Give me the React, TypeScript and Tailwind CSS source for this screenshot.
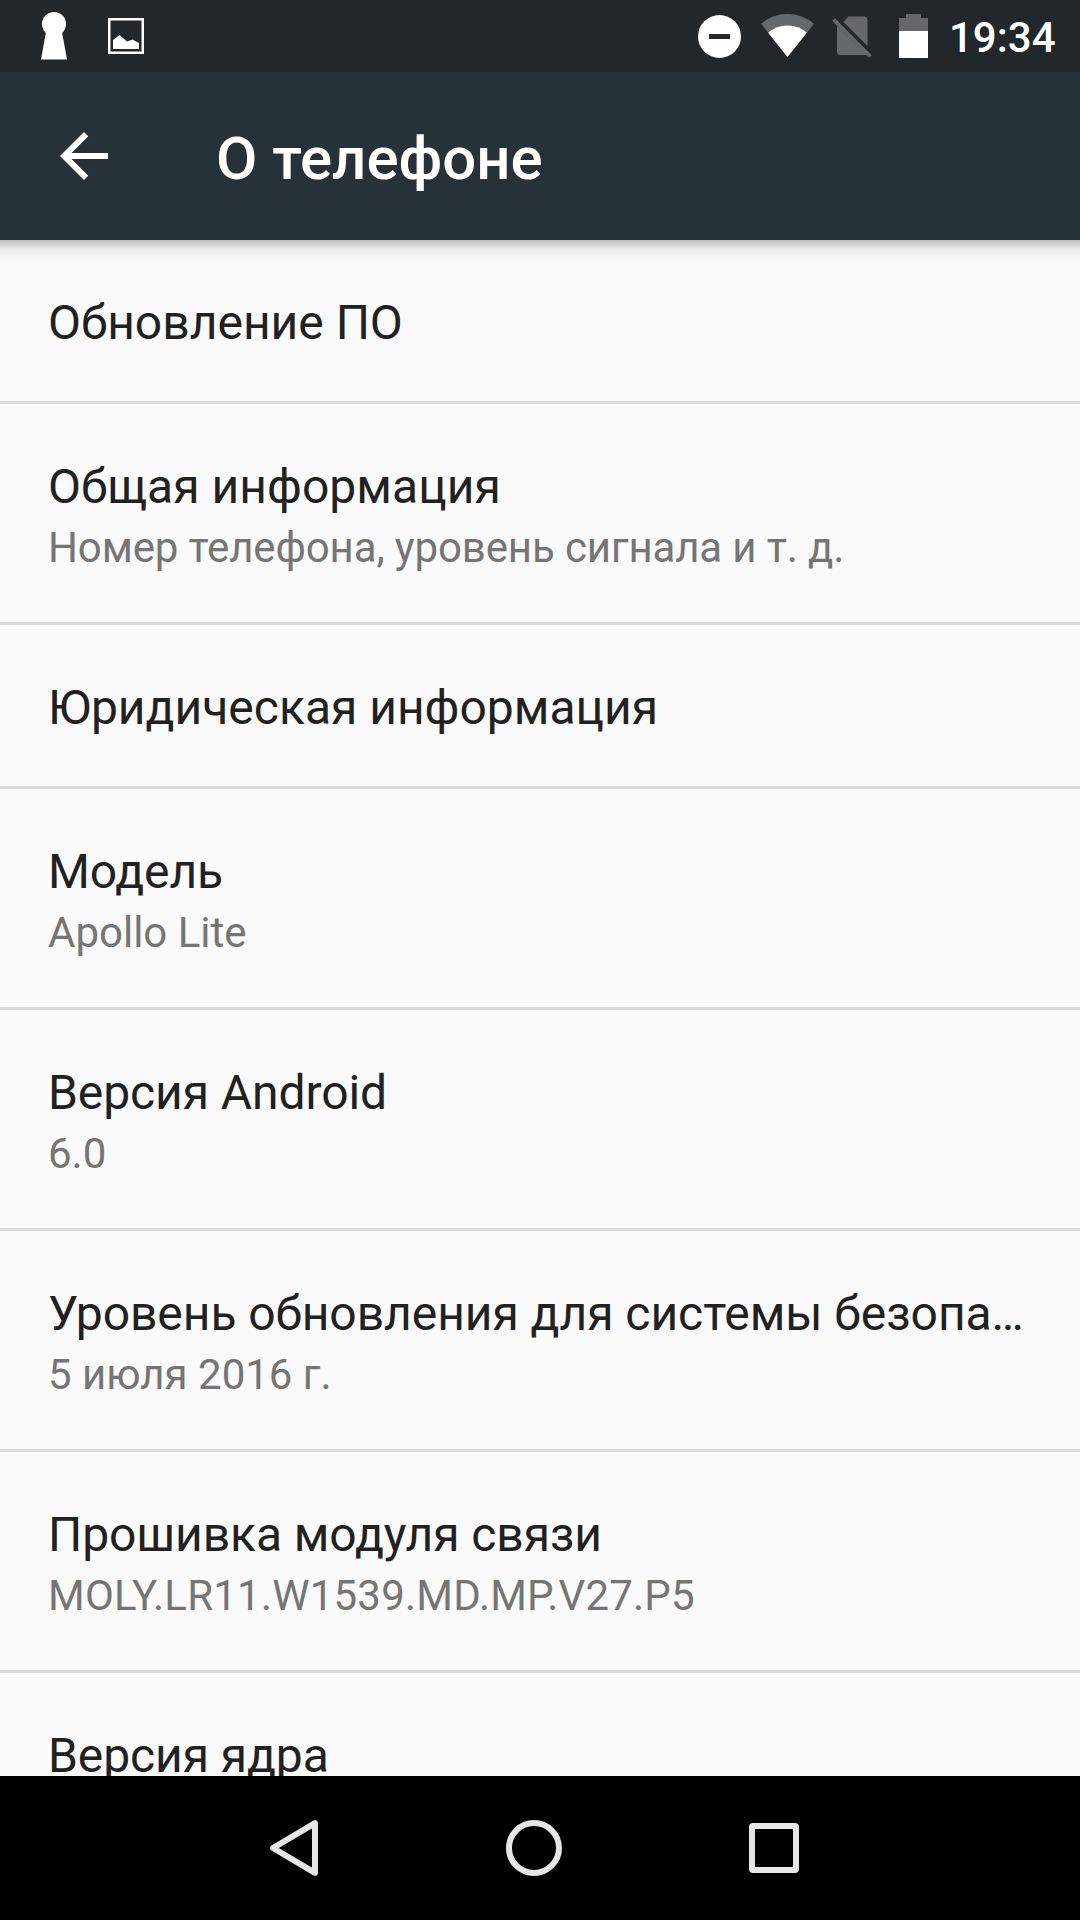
interface Item {
  title: string;
  summary?: string;
  titleClass?: string;
  summaryClass?: string;
}

const ITEMS: Item[] = [
  { title: "Обновление ПО" },
  {
    title: "Общая информация",
    summary: "Номер телефона, уровень сигнала и т. д.",
    titleClass: "tracking-[0.05px]",
    summaryClass: "tracking-[-0.13px]",
  },
  { title: "Юридическая информация" },
  { title: "Модель", summary: "Apollo Lite", titleClass: "tracking-[-0.15px]" },
  { title: "Версия Android", summary: "6.0", titleClass: "tracking-[-0.08px]" },
  {
    title: "Уровень обновления для системы безопа…",
    summary: "5 июля 2016 г.",
    titleClass: "tracking-[-0.05px]",
  },
  {
    title: "Прошивка модуля связи",
    summary: "MOLY.LR11.W1539.MD.MP.V27.P5",
    titleClass: "tracking-[-0.08px]",
    summaryClass: "tracking-[0.22px]",
  },
  { title: "Версия ядра", titleClass: "tracking-[-0.1px]" },
];

function KeyholeIcon() {
  return (
    <svg width="26" height="48" viewBox="0 0 26 48" fill="#fff">
      <circle cx="13" cy="12" r="12" />
      <path d="M5.2 19H20.8L26 47.6H0z" />
    </svg>
  );
}

function PictureIcon() {
  return (
    <svg width="36" height="36" viewBox="0 0 36 36" fill="#fff">
      <rect x="1.25" y="1.25" width="33.5" height="33.5" fill="none" stroke="#fff" strokeWidth="2.5" />
      <path d="M5 31V22L11.5 17L19 23.5L24.5 21.5L31 25V31z" />
    </svg>
  );
}

function DndIcon() {
  return (
    <svg width="43" height="43" viewBox="0 0 43 43">
      <circle cx="21.5" cy="21.5" r="21.5" fill="#fff" />
      <rect x="11" y="19" width="21" height="5" fill="#22272b" />
    </svg>
  );
}

function WifiIcon() {
  return (
    <svg width="53" height="43" viewBox="0 0 53 43">
      <path d="M26.5 43L0 9.8Q11.5 0 26.5 0T53 9.8z" fill="#66696c" />
      <path d="M26.5 43L7.2 18.8Q15.5 11.5 26.5 11.5T45.8 18.8z" fill="#fff" />
    </svg>
  );
}

function NoSimIcon() {
  return (
    <svg width="40" height="42" viewBox="0 0 40 42">
      <path d="M11.5 6L16.5 0.5H32Q35.5 0.5 35.5 4V30z" fill="#66696c" />
      <path d="M5 9.5L35 39H8.5Q5 39 5 35.5z" fill="#66696c" />
      <path d="M1.6 3.4L38.4 40.4" stroke="#66696c" strokeWidth="3.6" />
    </svg>
  );
}

function BatteryIcon() {
  return (
    <svg width="29" height="44" viewBox="0 0 29 44">
      <path d="M7 0H22V4H29V17H0V4H7z" fill="#66696c" />
      <path d="M0 17H29V44H0z" fill="#fff" />
    </svg>
  );
}

function StatusBar() {
  return (
    <div className="flex h-[72px] shrink-0 items-start bg-[#22272b] pl-[41px]">
      <div className="mt-3">
        <KeyholeIcon />
      </div>
      <div className="mt-[18px] ml-[41px]">
        <PictureIcon />
      </div>
      <div className="mt-[15px] ml-[554px]">
        <DndIcon />
      </div>
      <div className="mt-[14px] ml-5">
        <WifiIcon />
      </div>
      <div className="mt-4 ml-[18px]">
        <NoSimIcon />
      </div>
      <div className="mt-[14px] ml-[27px]">
        <BatteryIcon />
      </div>
      <span className="mt-[13px] ml-[21px] text-[42px] leading-[50px] font-medium text-white">19:34</span>
    </div>
  );
}

function Toolbar() {
  return (
    <header className="flex h-[168px] shrink-0 items-center bg-[#263238] pl-12">
      <button className="block">
        <svg width="72" height="72" viewBox="0 0 24 24" fill="#fff">
          <path d="M20 11H7.83l5.59-5.59L12 4l-8 8 8 8 1.41-1.41L7.83 13H20v-2z" />
        </svg>
      </button>
      <h1 className="ml-24 pt-1.5 text-[60px] leading-[72px] font-medium text-white">О телефоне</h1>
    </header>
  );
}

function Row({ title, summary, titleClass = "", summaryClass = "" }: Item) {
  return (
    <li
      className={[
        "shrink-0 border-b-[3px] border-[#dadada] px-12 pt-[54px]",
        summary ? "h-[221px]" : "h-[164px]",
      ].join(" ")}
    >
      <div className={`text-[48px] leading-[57px] whitespace-nowrap text-[#212121] ${titleClass}`}>{title}</div>
      {summary && (
        <div className={`mt-2 text-[42px] leading-[49px] whitespace-nowrap text-[#757575] ${summaryClass}`}>
          {summary}
        </div>
      )}
    </li>
  );
}

function NavBar() {
  return (
    <nav className="flex h-36 shrink-0 items-center bg-black pl-[266px]">
      <svg width="56" height="56" viewBox="0 0 56 56" fill="none" stroke="#e6e6e6" strokeWidth="6" strokeLinejoin="round">
        <path d="M49 3.2V52.8L7 28z" />
      </svg>
      <svg className="ml-[184px]" width="56" height="56" viewBox="0 0 56 56" fill="none" stroke="#e6e6e6" strokeWidth="6">
        <circle cx="28" cy="28" r="25" />
      </svg>
      <div className="ml-[187px] size-[50px] rounded-[4px] border-[6px] border-[#e6e6e6]" />
    </nav>
  );
}

export default function App() {
  return (
    <div className="flex h-[1920px] w-[1080px] flex-col overflow-hidden bg-[#fafafa] font-['Roboto',sans-serif]">
      <StatusBar />
      <Toolbar />
      <main className="min-h-0 flex-1 overflow-hidden bg-linear-to-b from-[#bebebe] via-[#ebebeb] via-[9px] to-[#fafafa] to-[20px]">
        <ul>
          {ITEMS.map(item => (
            <Row key={item.title} {...item} />
          ))}
        </ul>
      </main>
      <NavBar />
    </div>
  );
}
